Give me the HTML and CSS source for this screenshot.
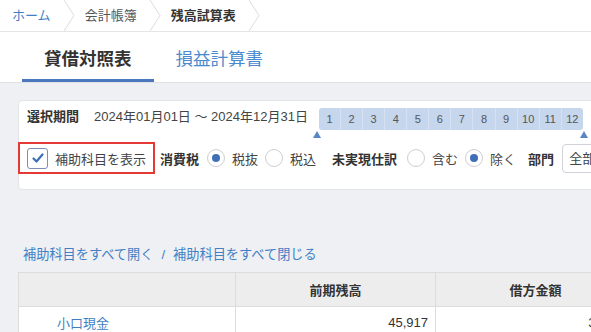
FILE: index.html
```html
<!DOCTYPE html>
<html lang="ja">
<head>
<meta charset="utf-8">
<title>貸借対照表</title>
<link rel="stylesheet" href="styles.css">
</head>
<body>
<div class="page">
  <nav class="crumbs">
    <a class="crumb link">ホーム</a>
    <svg class="chev" width="12" height="31" viewBox="0 0 12 31"><polyline points="1,0 11,15.5 1,31"/></svg>
    <span class="crumb">会計帳簿</span>
    <svg class="chev" width="12" height="31" viewBox="0 0 12 31"><polyline points="1,0 11,15.5 1,31"/></svg>
    <span class="crumb current">残高試算表</span>
    <svg class="chev" width="12" height="31" viewBox="0 0 12 31"><polyline points="1,0 11,15.5 1,31"/></svg>
  </nav>

  <div class="tabs">
    <div class="tab active">貸借対照表</div>
    <div class="tab">損益計算書</div>
  </div>

  <main class="content">
    <section class="card">
      <div class="row period">
        <span class="label">選択期間</span>
        <span class="dates">2024年01月01日 ～ 2024年12月31日</span>
        <div class="slider">
          <div class="months">
            <span>1</span><span>2</span><span>3</span><span>4</span><span>5</span><span>6</span>
            <span>7</span><span>8</span><span>9</span><span>10</span><span>11</span><span>12</span>
          </div>
          <span class="handle handle-left"></span>
          <span class="handle handle-right"></span>
        </div>
      </div>
      <div class="row options">
        <label class="highlight">
          <span class="checkbox">
            <svg width="14" height="14" viewBox="0 0 14 14"><polyline points="2.5,7.5 5.5,10.5 11.5,3.5"/></svg>
          </span>
          <span class="opt-text">補助科目を表示</span>
        </label>
        <span class="label tax-label">消費税</span>
        <span class="radio on"></span><span class="radio-text">税抜</span>
        <span class="radio"></span><span class="radio-text">税込</span>
        <span class="label unreal-label">未実現仕訳</span>
        <span class="radio"></span><span class="radio-text">含む</span>
        <span class="radio on"></span><span class="radio-text">除く</span>
        <span class="label dept-label">部門</span>
        <span class="select">全部門</span>
      </div>
    </section>

    <div class="links">
      <a class="link">補助科目をすべて開く</a><span class="sep">/</span><a class="link">補助科目をすべて閉じる</a>
    </div>

    <table class="grid">
      <colgroup><col class="c1"><col class="c2"><col class="c3"></colgroup>
      <thead>
        <tr><th></th><th>前期残高</th><th>借方金額</th></tr>
      </thead>
      <tbody>
        <tr><td class="acct"><a class="link">小口現金</a></td><td class="num">45,917</td><td class="num">31,250</td></tr>
      </tbody>
    </table>
  </main>
</div>
</body>
</html>
```

FILE: styles.css
```css
html, body {
  margin: 0;
  padding: 0;
}
body {
  width: 591px;
  height: 332px;
  overflow: hidden;
  font-family: "Liberation Sans", "Noto Sans CJK JP", sans-serif;
  font-size: 13px;
  color: #333;
  background: #fff;
}
.page {
  width: 591px;
  overflow: hidden;
}
.link {
  color: #3f7fc4;
  text-decoration: none;
}

/* breadcrumb */
.crumbs {
  display: flex;
  align-items: center;
  height: 31px;
  padding-left: 12px;
  border-bottom: 1px solid #e6e6e6;
}
.crumb {
  font-size: 13px;
  line-height: 31px;
  color: #555;
}
.crumb.link { color: #3f7fc4; }
.crumb.current { color: #333; font-weight: bold; }
.chev {
  margin: 0 10px 0 12px;
  flex: none;
}
.chev polyline {
  fill: none;
  stroke: #dcdcdc;
  stroke-width: 1;
}

/* tabs */
.tabs {
  display: flex;
  height: 50px;
  padding-left: 22px;
  border-bottom: 1px solid #dfe1e5;
  box-sizing: content-box;
}
.tab {
  box-sizing: border-box;
  height: 50px;
  padding: 4px 22px 0;
  display: flex;
  align-items: center;
  font-size: 17.5px;
  color: #4a8ad0;
  border-bottom: 3px solid transparent;
}
.tab.active {
  color: #333;
  font-weight: bold;
  border-bottom-color: #4a77bd;
}

/* content */
.content {
  background: #eff0f4;
  padding: 17px 0 40px 18px;
  min-height: 300px;
}
.card {
  width: 700px;
  height: 90px;
  box-sizing: border-box;
  background: #fff;
  border: 1px solid #e1e3e7;
  border-radius: 4px;
  padding: 7px 0 0 8px;
}
.row {
  display: flex;
}
.label {
  font-weight: bold;
  color: #333;
  white-space: nowrap;
}
.period {
  align-items: flex-start;
  height: 34px;
  line-height: 18px;
}
.dates {
  margin-left: 15px;
  color: #444;
  white-space: nowrap;
}
.slider {
  position: relative;
  margin-left: 11px;
  width: 264px;
  height: 22px;
}
.months {
  display: flex;
  height: 22px;
  background: #c6d6ed;
  border-radius: 3px;
  overflow: hidden;
}
.months span {
  flex: 1;
  text-align: center;
  line-height: 22px;
  font-size: 11px;
  color: #555;
  border-left: 1px solid #d6e2f3;
}
.months span:first-child { border-left: none; }
.handle {
  position: absolute;
  top: 23px;
  width: 0;
  height: 0;
  border-left: 4.5px solid transparent;
  border-right: 4.5px solid transparent;
  border-bottom: 7px solid #5a86c5;
}
.handle-left { left: -6px; }
.handle-right { right: -5px; }

.options {
  align-items: center;
  height: 32px;
  margin-left: -9px;
}
.highlight {
  display: flex;
  align-items: center;
  box-sizing: border-box;
  height: 32px;
  padding: 0 7px 0 7px;
  border: 2px solid #e53935;
}
.checkbox {
  box-sizing: border-box;
  width: 21px;
  height: 21px;
  border: 1.5px solid #7b8fb3;
  border-radius: 3px;
  display: flex;
  align-items: center;
  justify-content: center;
  margin-right: 7px;
}
.checkbox polyline {
  fill: none;
  stroke: #3d6db4;
  stroke-width: 2.2;
  stroke-linecap: round;
  stroke-linejoin: round;
}
.opt-text { color: #444; white-space: nowrap; }
.tax-label { margin-left: 5px; }
.radio {
  box-sizing: border-box;
  flex: none;
  width: 18px;
  height: 18px;
  border: 1px solid #cfcfcf;
  border-radius: 50%;
  background: #fff;
  margin-left: 8px;
  display: flex;
  align-items: center;
  justify-content: center;
}
.radio.on::after {
  content: "";
  width: 8px;
  height: 8px;
  border-radius: 50%;
  background: #3f6fb7;
}
.radio-text {
  margin-left: 7px;
  color: #444;
  white-space: nowrap;
}
.radio-text + .radio { margin-left: 7px; }
.unreal-label { margin-left: 16px; }
.unreal-label + .radio { margin-left: 10px; }
.dept-label { margin-left: 12px; }
.select {
  box-sizing: border-box;
  margin-left: 8px;
  height: 29px;
  width: 90px;
  border: 1px solid #cfd3d9;
  border-radius: 4px;
  padding-left: 6px;
  line-height: 27px;
  color: #444;
  white-space: nowrap;
}

.links {
  margin: 56px 0 0 5px;
  line-height: 18px;
  white-space: nowrap;
  font-size: 13.2px;
}
.sep {
  color: #3f7fc4;
  margin: 0 8px;
}

.grid {
  margin-top: 8px;
  border-collapse: collapse;
  table-layout: fixed;
  width: 617px;
  background: #fff;
}
.grid col.c1 { width: 217px; }
.grid col.c2 { width: 200px; }
.grid col.c3 { width: 200px; }
.grid th {
  height: 33px;
  background: #ededed;
  border: 1.5px solid #dcdcdc;
  font-weight: bold;
  color: #333;
  text-align: center;
  padding: 0;
}
.grid td {
  height: 30px;
  border-left: 1.5px solid #dcdcdc;
  border-right: 1.5px solid #dcdcdc;
  padding: 0 7px;
  vertical-align: middle;
}
.grid td.acct { padding-left: 38px; }
.grid td.num { text-align: right; color: #333; }
```
